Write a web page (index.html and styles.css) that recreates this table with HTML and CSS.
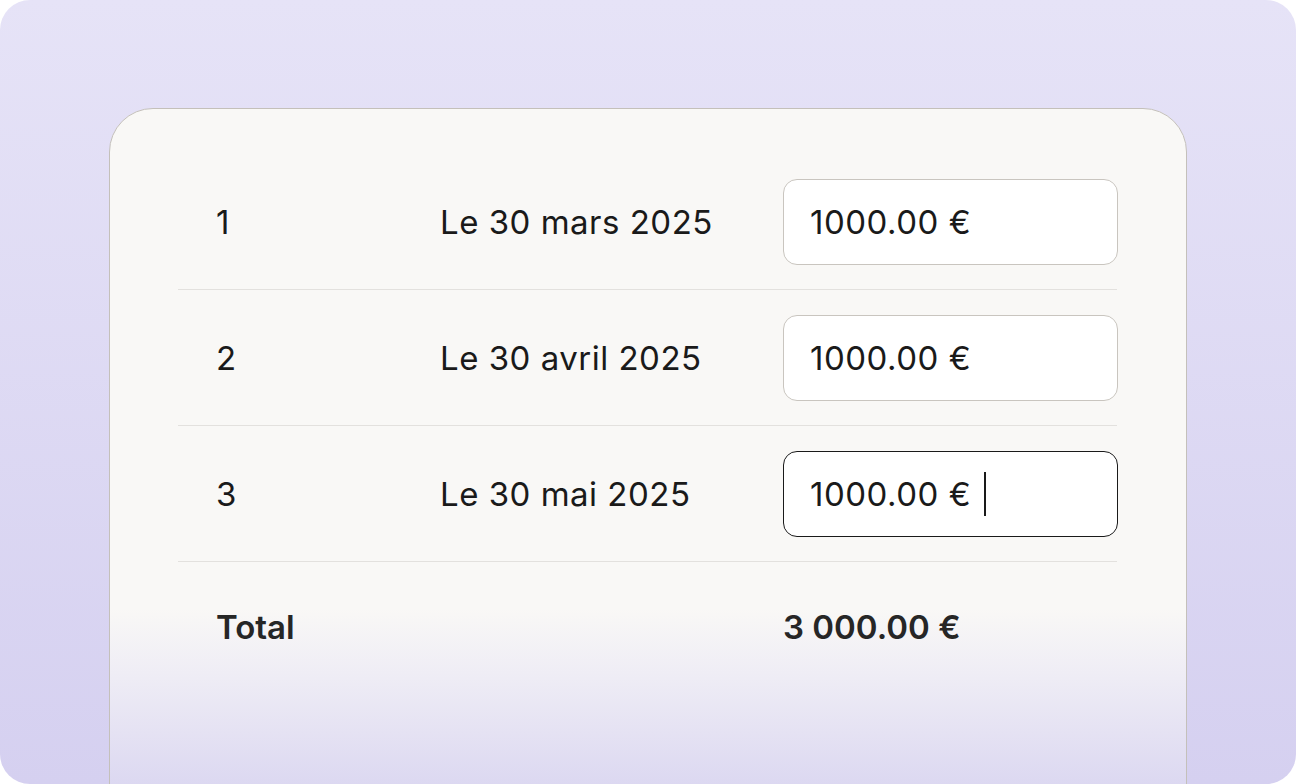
FILE: index.html
```html
<!DOCTYPE html>
<html lang="fr">
<head>
<meta charset="utf-8">
<title>Échéancier</title>
<link rel="stylesheet" href="styles.css">
</head>
<body>
<div class="frame">
  <div class="card">
    <div class="row">
      <div class="num">1</div>
      <div class="date">Le 30 mars 2025</div>
      <div class="field">1000.00 €</div>
    </div>
    <div class="row">
      <div class="num">2</div>
      <div class="date">Le 30 avril 2025</div>
      <div class="field">1000.00 €</div>
    </div>
    <div class="row">
      <div class="num">3</div>
      <div class="date">Le 30 mai 2025</div>
      <div class="field field-active">1000.00 €<span class="caret"></span></div>
    </div>
    <div class="row row-total">
      <div class="num total-label">Total</div>
      <div class="date"></div>
      <div class="total-value">3 000.00 €</div>
    </div>
  </div>
</div>
</body>
</html>
```

FILE: styles.css
```css
html, body {
  margin: 0;
  padding: 0;
  background: #ffffff;
}

body {
  font-family: Inter, "Noto Sans", "Liberation Sans", sans-serif;
  color: #1a1a1a;
}

.frame {
  width: 1296px;
  height: 784px;
  box-sizing: border-box;
  border-radius: 30px;
  overflow: hidden;
  background: linear-gradient(to bottom, #e6e3f7 0%, #d5d0f0 100%);
  padding-top: 108px;
  padding-left: 109px;
}

.card {
  width: 1078px;
  height: 760px;
  box-sizing: border-box;
  border: 1px solid #c4c0ba;
  border-radius: 44px;
  padding: 70px 69px 0 68px;
  background: linear-gradient(to bottom, #f9f8f6 0px, #f9f8f6 500px, #eeecf5 570px, #dcd8f1 676px, #d8d3f0 760px);
}

.row {
  display: grid;
  grid-template-columns: 224px 343px 335px;
  align-items: center;
  padding: 25px 0 24px 38px;
  border-bottom: 1px solid #e3e1de;
  font-size: 33px;
  letter-spacing: 0.5px;
}

.row:first-child {
  padding-top: 0;
}

.row-total {
  border-bottom: none;
  height: 86px;
  padding-top: 22px;
}

.num, .date {
  line-height: 40px;
}

.field {
  height: 86px;
  box-sizing: border-box;
  border: 1px solid #c9c5bf;
  border-radius: 14px;
  background: #ffffff;
  display: flex;
  align-items: center;
  padding-left: 26px;
  line-height: 40px;
}

.field-active {
  border: 1.5px solid #1a1a1a;
}

.caret {
  display: inline-block;
  width: 2px;
  height: 44px;
  background: #1a1a1a;
  margin-left: 13px;
}

.total-label,
.total-value {
  font-weight: 600;
  color: #262626;
  letter-spacing: 0;
}
```
